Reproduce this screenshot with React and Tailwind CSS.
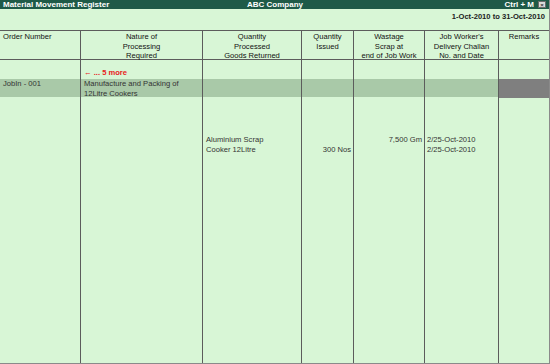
import React from "react";

const cols = "grid grid-cols-[80px_122px_99px_52px_71px_74px_1fr]";
const cell = "border-l border-[#5c5c5c]";

function Row({ className = "", children }) {
  return <div className={`${cols} ${className}`}>{children}</div>;
}

export default function App() {
  return (
    <div
      className="w-[550px] h-[364px] bg-[#d8f6d6] flex flex-col overflow-hidden text-[#222] border-r border-b border-[#8a8a8a]"
      style={{ fontFamily: '"Liberation Sans", Arial, sans-serif' }}
    >
      {/* title bar */}
      <div className="h-[9px] bg-[#1f5a48] text-white font-bold text-[8px] leading-[9px] flex items-center px-[3px] relative">
        <span>Material Movement Register</span>
        <span className="absolute left-[247px]">ABC Company</span>
        <span className="ml-auto mr-[4px]">Ctrl + M</span>
        <span className="w-[8px] h-[7px] bg-[#d9d9d9] border border-[#6b6b6b] flex items-center justify-center text-[#333] text-[6px] leading-[6px]">×</span>
      </div>
      {/* date area */}
      <div className="h-[21px] flex justify-end items-start pt-[3px] pr-[4px]">
        <span className="text-[7.6px] leading-[10px] font-bold text-[#222]">1-Oct-2010 to 31-Oct-2010</span>
      </div>
      {/* header row */}
      <Row className="h-[30px] border-t border-b border-[#5c5c5c] text-[7.6px] leading-[9.5px] text-[#111]">
        <div className="pl-[3px] pt-[1px]">Order Number</div>
        <div className={`${cell} text-center pt-[1px]`}>Nature of<br />Processing<br />Required</div>
        <div className={`${cell} text-center pt-[1px]`}>Quantity<br />Processed<br />Goods Returned</div>
        <div className={`${cell} text-center pt-[1px]`}>Quantity<br />Issued</div>
        <div className={`${cell} text-center pt-[1px]`}>Wastage<br />Scrap at<br />end of Job Work</div>
        <div className={`${cell} text-center pt-[1px]`}>Job Worker's<br />Delivery Challan<br />No. and Date</div>
        <div className={`${cell} text-center pt-[1px]`}>Remarks</div>
      </Row>
      {/* more row */}
      <Row className="h-[19px] text-[7.6px] leading-[10px]">
        <div></div>
        <div className={`${cell} flex items-end pl-[3px] pb-[1px] text-[#e8201c] font-bold`}>← ... 5 more</div>
        <div className={cell}></div>
        <div className={cell}></div>
        <div className={cell}></div>
        <div className={cell}></div>
        <div className={cell}></div>
      </Row>
      {/* highlighted row */}
      <Row className="h-[18px] bg-[#a9c9a8] text-[7.6px] leading-[9.5px] text-[#333]">
        <div className="pl-[3px] pt-[0px]">JobIn - 001</div>
        <div className={`${cell} pl-[3px]`}>Manufacture and Packing of<br />12Litre Cookers</div>
        <div className={cell}></div>
        <div className={cell}></div>
        <div className={cell}></div>
        <div className={cell}></div>
        <div className={`${cell} bg-[#7f7f7f]`}></div>
      </Row>
      {/* spacer */}
      <Row className="h-[38px]">
        <div></div>
        <div className={cell}></div>
        <div className={cell}></div>
        <div className={cell}></div>
        <div className={cell}></div>
        <div className={cell}></div>
        <div className={cell}></div>
      </Row>
      {/* item row */}
      <Row className="h-[20px] text-[7.6px] leading-[10px] text-[#333]">
        <div></div>
        <div className={cell}></div>
        <div className={`${cell} pl-[3px]`}>Aluminium Scrap<br />Cooker 12Litre</div>
        <div className={`${cell} text-right pr-[2px]`}><br />300 Nos</div>
        <div className={`${cell} text-right pr-[2px]`}>7,500 Gm</div>
        <div className={`${cell} pl-[2px]`}>2/25-Oct-2010<br />2/25-Oct-2010</div>
        <div className={cell}></div>
      </Row>
      {/* filler */}
      <Row className="flex-1">
        <div></div>
        <div className={cell}></div>
        <div className={cell}></div>
        <div className={cell}></div>
        <div className={cell}></div>
        <div className={cell}></div>
        <div className={cell}></div>
      </Row>
    </div>
  );
}
